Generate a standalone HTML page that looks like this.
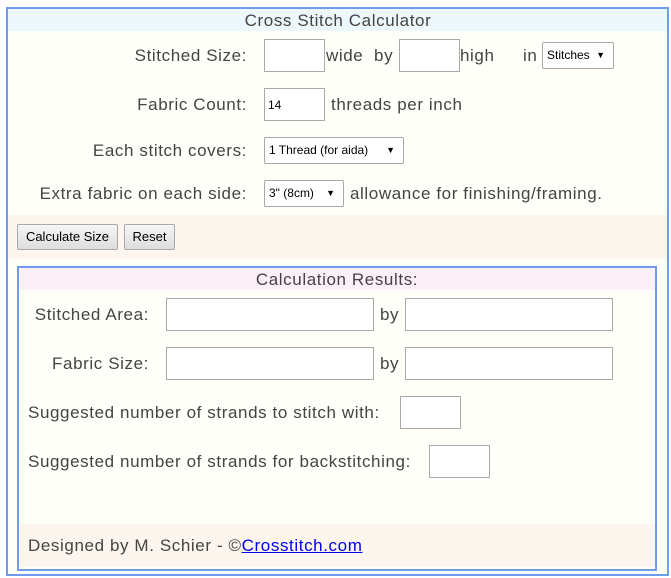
<!DOCTYPE html>
<html><head><style>
body{margin:0;background:#fff;font-family:"Liberation Sans",sans-serif;color:#444;}
.a{position:absolute;white-space:nowrap;}
.t{font-size:17px;letter-spacing:0.6px;}
.box{position:absolute;border:1px solid #a9a9a9;background:#fff;box-sizing:border-box;}
.sel{position:absolute;border:1px solid #a9a9a9;background:#fff;box-sizing:border-box;font-size:12px;color:#000;padding-left:4px;line-height:25px;border-radius:2px;}
.sel b{position:absolute;right:8px;top:0;font-size:9px;font-weight:normal;}
.btn{position:absolute;border:1px solid #a9a9a9;background:linear-gradient(#f6f6f6,#dedede);box-sizing:border-box;font-size:13px;color:#000;text-align:center;line-height:24px;border-radius:2px;}
</style></head><body>
<div class="a" style="left:6px;top:7px;width:659px;height:565px;border:2px solid #6f9af0;background:#fffff9;"></div>
<div class="a" style="left:8px;top:9px;width:659px;height:22px;background:#ecf8fb;"></div>
<div class="a t" style="left:0;width:676px;text-align:center;top:11px;">Cross Stitch Calculator</div>

<div class="a t" style="right:424px;top:46px;">Stitched Size:</div>
<div class="box" style="left:264px;top:39px;width:61px;height:33px;"></div>
<div class="a t" style="left:326px;top:46px;">wide&nbsp; by</div>
<div class="box" style="left:399px;top:39px;width:61px;height:33px;"></div>
<div class="a t" style="left:460px;top:46px;">high</div>
<div class="a t" style="left:523px;top:46px;">in</div>
<div class="sel" style="left:542px;top:42px;width:72px;height:27px;">Stitches<b>▼</b></div>

<div class="a t" style="right:424px;top:95px;">Fabric Count:</div>
<div class="box" style="left:264px;top:88px;width:61px;height:33px;font-size:12px;color:#000;padding:9px 0 0 3px;">14</div>
<div class="a t" style="left:331px;top:95px;">threads per inch</div>

<div class="a t" style="right:424px;top:141px;">Each stitch covers:</div>
<div class="sel" style="left:264px;top:137px;width:140px;height:27px;">1 Thread (for aida)<b>▼</b></div>

<div class="a t" style="right:424px;top:184px;">Extra fabric on each side:</div>
<div class="sel" style="left:264px;top:180px;width:80px;height:27px;">3" (8cm)<b>▼</b></div>
<div class="a t" style="left:350px;top:184px;">allowance for finishing/framing.</div>

<div class="a" style="left:8px;top:215px;width:659px;height:43px;background:#fdf6ef;"></div>
<div class="btn" style="left:17px;top:224px;width:101px;height:26px;">Calculate Size</div>
<div class="btn" style="left:124px;top:224px;width:51px;height:26px;">Reset</div>

<div class="a" style="left:17px;top:266px;width:636px;height:301px;border:2px solid #6f9af0;background:#fffff9;"></div>
<div class="a" style="left:19px;top:268px;width:636px;height:22px;background:#fcf0f8;"></div>
<div class="a t" style="left:17px;width:640px;text-align:center;top:270px;">Calculation Results:</div>

<div class="a t" style="right:522px;top:305px;">Stitched Area:</div>
<div class="box" style="left:166px;top:298px;width:208px;height:33px;"></div>
<div class="a t" style="left:380px;top:305px;">by</div>
<div class="box" style="left:405px;top:298px;width:208px;height:33px;"></div>

<div class="a t" style="right:522px;top:354px;">Fabric Size:</div>
<div class="box" style="left:166px;top:347px;width:208px;height:33px;"></div>
<div class="a t" style="left:380px;top:354px;">by</div>
<div class="box" style="left:405px;top:347px;width:208px;height:33px;"></div>

<div class="a t" style="left:28px;top:403px;">Suggested number of strands to stitch with:</div>
<div class="box" style="left:400px;top:396px;width:61px;height:33px;"></div>
<div class="a t" style="left:28px;top:452px;">Suggested number of strands for backstitching:</div>
<div class="box" style="left:429px;top:445px;width:61px;height:33px;"></div>

<div class="a" style="left:19px;top:524px;width:636px;height:43px;background:#fdf6ef;"></div>
<div class="a t" style="left:28px;top:536px;">Designed by M. Schier - ©<span style="color:#00e;text-decoration:underline;">Crosstitch.com</span></div>
</body></html>
